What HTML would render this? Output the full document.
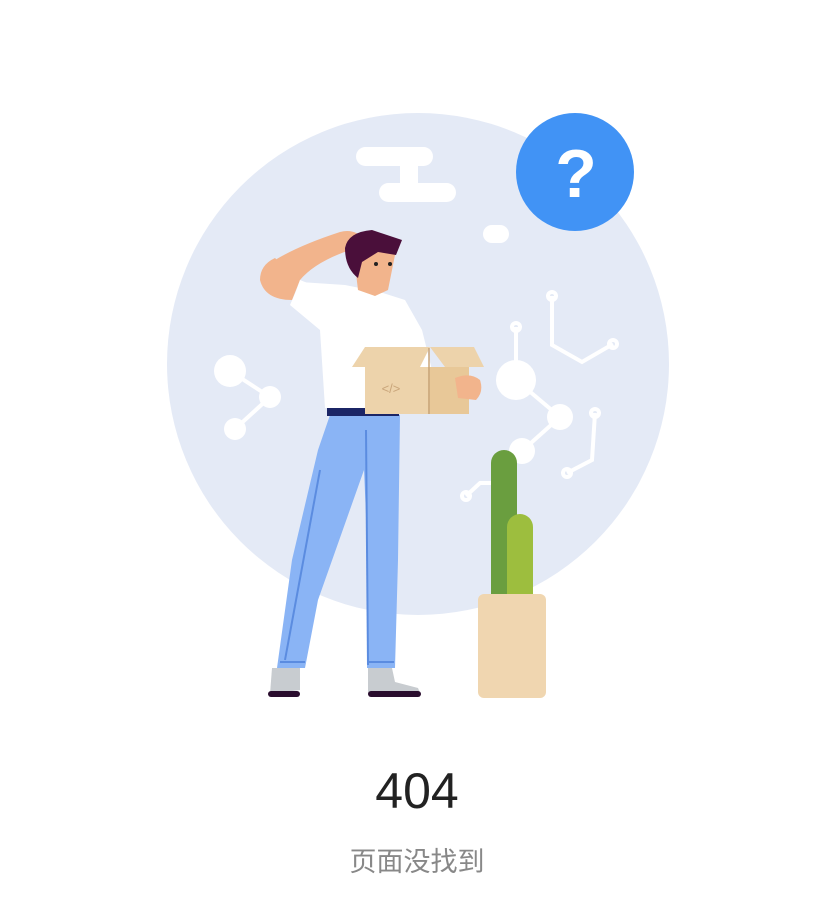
<!DOCTYPE html>
<html><head><meta charset="utf-8"><style>
html,body{margin:0;padding:0;background:#fff;width:832px;height:916px;overflow:hidden}
.t1{position:absolute;left:0;width:834px;top:762px;text-align:center;font:50px "Liberation Sans",sans-serif;color:#222}
.t2{position:absolute;left:0;width:834px;top:840px;text-align:center;font:27px "Liberation Sans","Noto Sans CJK SC",sans-serif;color:#888}
</style></head><body>
<svg width="832" height="916" style="position:absolute;left:0;top:0">
<circle cx="418" cy="364" r="251" fill="#E4EAF6"/>
<rect x="356" y="147" width="77" height="19" rx="9.5" fill="#fff"/>
<rect x="400" y="160" width="18" height="30" fill="#fff"/>
<rect x="379" y="183" width="77" height="19" rx="9.5" fill="#fff"/>
<rect x="483" y="225" width="26" height="18" rx="9" fill="#fff"/>
<circle cx="575" cy="172" r="59" fill="#4193F5"/>
<text x="576" y="197" text-anchor="middle" font-family="Liberation Sans" font-weight="bold" font-size="68" fill="#fff">?</text>
<g stroke="#fff" stroke-width="4" fill="none">
<line x1="230" y1="371" x2="270" y2="397"/><line x1="270" y1="397" x2="235" y2="429"/>
<line x1="516" y1="327" x2="516" y2="380"/><line x1="516" y1="380" x2="560" y2="417"/><line x1="560" y1="417" x2="522" y2="451"/>
<polyline points="552,296 552,345 582,362 613,344"/>
<polyline points="595,413 592,460 567,473"/>
<polyline points="466,496 480,483 495,483"/>
<circle cx="552" cy="296" r="4"/><circle cx="613" cy="344" r="4"/><circle cx="595" cy="413" r="4"/><circle cx="567" cy="473" r="4"/><circle cx="466" cy="496" r="4"/><circle cx="516" cy="327" r="4"/>
</g>
<g fill="#fff">
<circle cx="230" cy="371" r="16"/><circle cx="270" cy="397" r="11"/><circle cx="235" cy="429" r="11"/>
<circle cx="516" cy="380" r="20"/><circle cx="560" cy="417" r="13"/><circle cx="522" cy="451" r="13"/>
</g>
<rect x="491" y="450" width="26" height="160" rx="13" fill="#6A9E3F"/>
<rect x="507" y="514" width="26" height="96" rx="13" fill="#9DBE3E"/>
<rect x="478" y="594" width="68" height="104" rx="6" fill="#F0D6B0"/>
<path d="M330 415 L400 415 L398 560 L395 668 L367 668 L368 560 L364 470 L318 600 L305 668 L277 668 L292 560 L318 450 Z" fill="#8AB4F5"/>
<g stroke="#5B8CE0" stroke-width="2" fill="none">
<line x1="366" y1="430" x2="368" y2="665"/><line x1="320" y1="470" x2="285" y2="660"/><line x1="280" y1="662" x2="305" y2="662"/><line x1="368" y1="662" x2="394" y2="662"/>
</g>
<path d="M272 668 L300 668 L300 690 L270 694 Z" fill="#C8CCD0"/>
<rect x="268" y="691" width="32" height="6" rx="3" fill="#2A0D2E"/>
<path d="M368 668 L392 668 L395 682 L418 688 L420 693 L368 694 Z" fill="#C8CCD0"/>
<rect x="368" y="691" width="53" height="6" rx="3" fill="#2A0D2E"/>
<rect x="327" y="406" width="72" height="10" fill="#1B2566"/>
<path d="M300 282 L345 285 L380 292 L405 300 L422 330 L432 370 L400 370 L400 408 L325 408 L320 330 L290 305 Z" fill="#fff"/>
<path d="M300 282 L275 260 Q300 245 340 232 Q355 228 365 240 L350 250 Q315 262 300 280 L292 300 Q265 300 260 280 Q260 265 275 258 Z" fill="#F2B48C"/>
<path d="M300 280 L292 302 L315 312 L325 290 Z" fill="#fff"/>
<path d="M355 265 L358 290 L375 296 L388 290 L395 255 L385 245 L360 245 Z" fill="#F2B48C"/>
<path d="M345 248 Q348 232 372 230 L402 240 L396 255 L378 252 L362 262 L358 278 Q345 268 345 248 Z" fill="#4A0F3A"/>
<circle cx="376" cy="264" r="2" fill="#222"/><circle cx="390" cy="264" r="2" fill="#222"/>
<polygon points="352,367 365,347 430,347 420,367" fill="#EDD3AB"/>
<polygon points="430,347 474,347 484,367 445,367" fill="#EDD3AB"/>
<rect x="365" y="367" width="104" height="47" fill="#EDD3AB"/>
<rect x="428" y="367" width="41" height="47" fill="#E8C898"/>
<line x1="429" y1="348" x2="429" y2="414" stroke="#C9A57A" stroke-width="1.5"/>
<text x="391" y="393" text-anchor="middle" font-family="Liberation Sans" font-size="13" fill="#C9A57A">&lt;/&gt;</text>
<path d="M455 378 Q470 372 480 380 Q484 392 476 400 L458 398 Z" fill="#F2B48C"/>
</svg>
<div class="t1">404</div>
<div class="t2">页面没找到</div>
</body></html>
